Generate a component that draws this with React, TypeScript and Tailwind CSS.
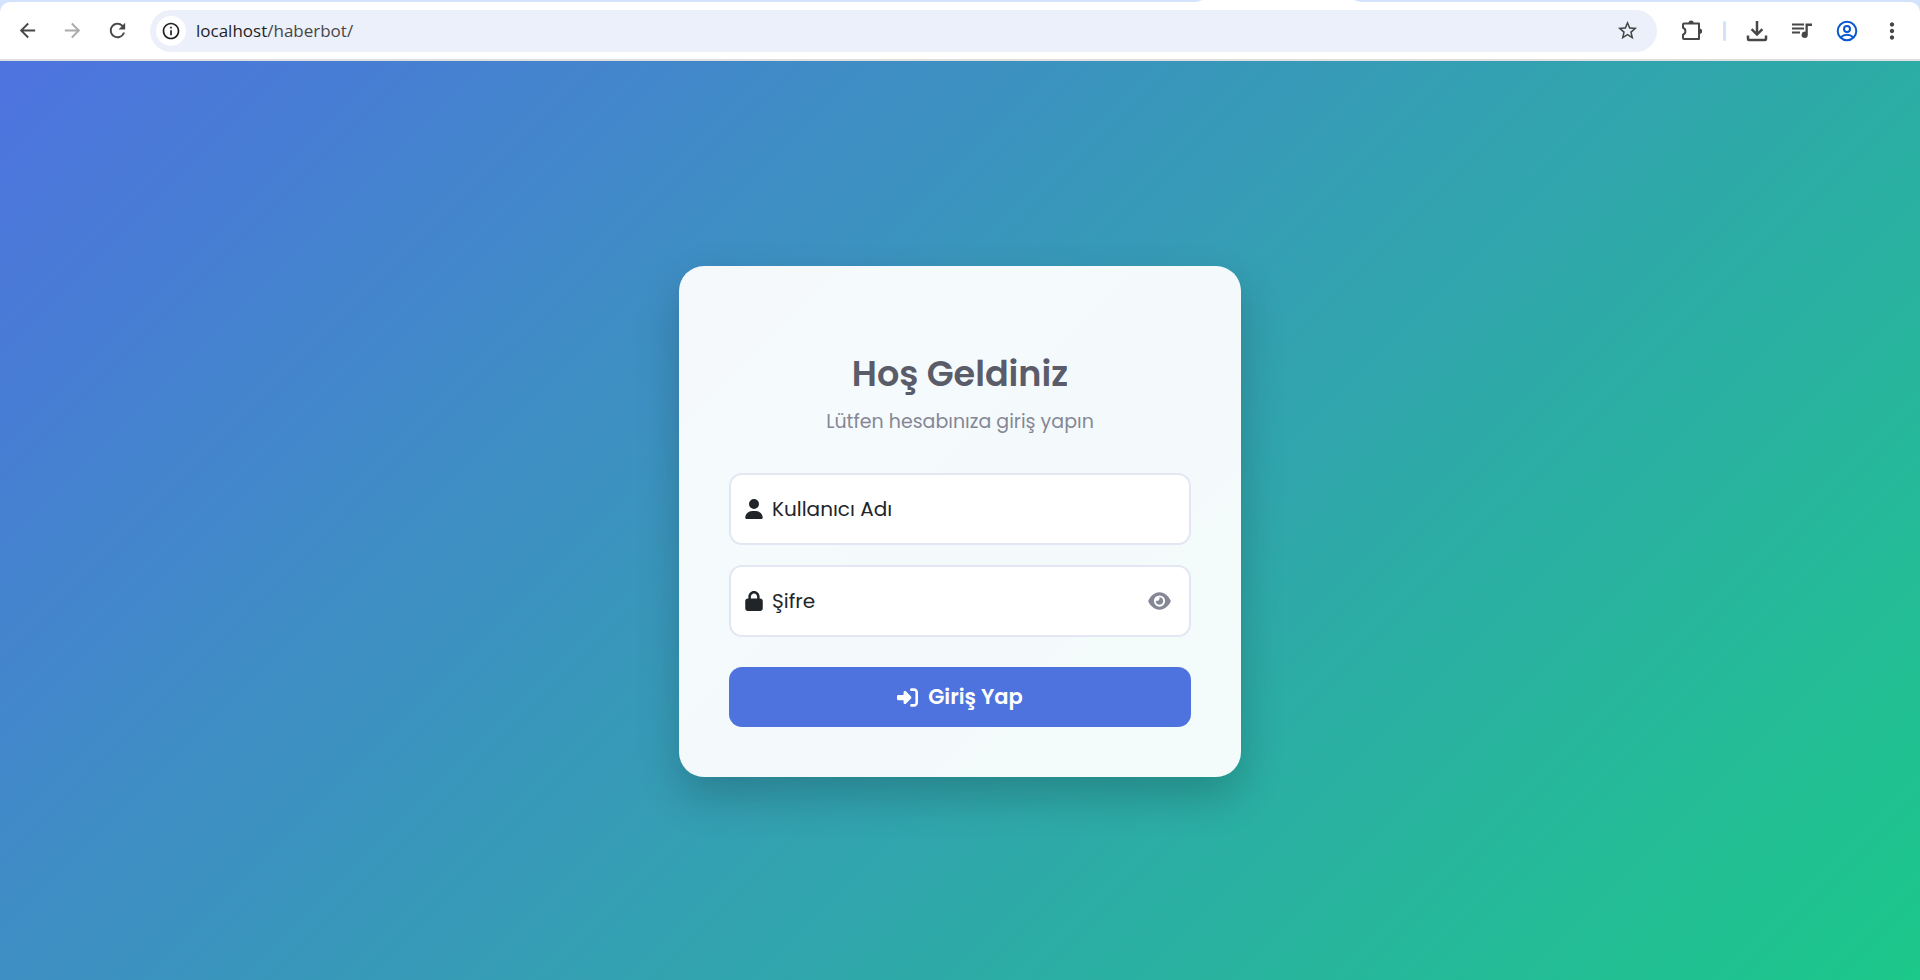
import { useState } from "react";
import type { ReactNode } from "react";
import { MdArrowBack, MdArrowForward, MdInfoOutline, MdMoreVert, MdRefresh, MdStarBorder } from "react-icons/md";
import { FaEye, FaEyeSlash, FaLock, FaRightToBracket, FaUser } from "react-icons/fa6";

function ToolButton({ label, children, className = "" }: { label: string; children: ReactNode; className?: string }) {
  return (
    <button type="button" aria-label={label} className={`flex h-8 w-[30px] items-center justify-center ${className}`}>
      {children}
    </button>
  );
}

function ExtensionIcon() {
  return (
    <svg viewBox="0 0 22 22" className="size-[22px]" fill="none" stroke="currentColor" strokeWidth="2">
      <path d="M3 3.5h15v15.5H3q-1 0-1-1v-3.4a3.6 3.6 0 0 0 0-6.8V4.5q0-1 1-1Z" strokeLinejoin="round" />
      <path d="M7.5 3a2.6 2.6 0 0 1 5.2 0ZM18.5 8.6a2.6 2.6 0 0 1 0 5.2Z" fill="currentColor" stroke="none" />
    </svg>
  );
}

function DownloadIcon() {
  return (
    <svg viewBox="0 0 22 22" className="size-[22px]" fill="none" stroke="currentColor" strokeWidth="2.5">
      <path d="M11 1v13.5M5.6 9.2 11 14.6l5.4-5.4M2 15.5v3.5q0 1 1 1h16q1 0 1-1v-3.5" />
    </svg>
  );
}

function MediaIcon() {
  return (
    <svg viewBox="0 0 20 16" className="h-4 w-5" fill="currentColor">
      <path d="M0 0.5h12v2H0zM0 4.5h12v2H0zM0 8.5h8v2H0z" />
      <path d="M13.5 0.5H20v2.4h-4.2v8.9a3.1 3.1 0 1 1-2.3-3Z" />
    </svg>
  );
}

function ProfileIcon() {
  return (
    <svg viewBox="0 0 22 22" className="size-[22px]" fill="none" stroke="currentColor" strokeWidth="2">
      <circle cx="11" cy="11" r="9.3" />
      <circle cx="11" cy="9" r="3" />
      <path d="M4.6 17.4q2.8-2.6 6.4-2.6t6.4 2.6" />
    </svg>
  );
}

function BrowserBar() {
  return (
    <header className="bg-[#d3e3fd]">
      <div className="flex h-[2px]">
        <div className="ml-[62.3%] w-[164px] bg-white [clip-path:polygon(4%_0,96%_0,100%_100%,0_100%)]" />
      </div>
      <div className="flex h-[59px] items-center rounded-t-[10px] border-b-2 border-[#dfdfdf] bg-white pr-[13px] pl-3 text-[#474747]">
        <nav className="flex gap-[15px]">
          <ToolButton label="Geri">
            <MdArrowBack className="size-[23px]" />
          </ToolButton>
          <ToolButton label="İleri" className="text-[#ababab]">
            <MdArrowForward className="size-[23px]" />
          </ToolButton>
          <ToolButton label="Yenile">
            <MdRefresh className="size-[23px]" />
          </ToolButton>
        </nav>
        <div className="ml-[18px] flex h-[42px] flex-1 items-center rounded-full bg-[#ebf0fa] pr-[15px] pl-1.5">
          <button type="button" aria-label="Site bilgileri" className="flex size-[30px] items-center justify-center rounded-full bg-white text-[#1f1f1f]">
            <MdInfoOutline className="size-5" />
          </button>
          <a href="#" className="ml-[10px] flex-1 font-['Open_Sans',sans-serif] text-[17px] leading-6 text-[#1f1f1f]">
            localhost<span className="text-[#474747]">/haberbot/</span>
          </a>
          <ToolButton label="Yer işareti ekle">
            <MdStarBorder className="size-[23px]" />
          </ToolButton>
        </div>
        <div className="ml-5 flex items-center gap-4">
          <ToolButton label="Uzantılar">
            <ExtensionIcon />
          </ToolButton>
          <span className="h-5 w-[3px] rounded-full bg-[#d3e3fd]" />
          <div className="flex items-center gap-[15px]">
            <ToolButton label="İndirilenler">
              <DownloadIcon />
            </ToolButton>
            <ToolButton label="Medya">
              <MediaIcon />
            </ToolButton>
            <ToolButton label="Profil" className="text-[#0b57d0]">
              <ProfileIcon />
            </ToolButton>
            <ToolButton label="Menü">
              <MdMoreVert className="size-[26px]" />
            </ToolButton>
          </div>
        </div>
      </div>
    </header>
  );
}

const fieldBox = "flex items-center rounded-[13px] border-2 border-[#e3e6f3] bg-white px-[14px]";
const fieldLabel = "flex shrink-0 items-center gap-[9px] text-[20px] leading-7 text-[#212529]";
const fieldInput = "h-[68px] min-w-0 flex-1 bg-transparent pl-2 text-[20px] text-[#212529] outline-none";

export default function App() {
  const [visible, setVisible] = useState(false);

  return (
    <div className="flex min-h-screen flex-col">
      <BrowserBar />
      <main className="flex flex-1 items-center justify-center bg-[linear-gradient(135deg,#4e73df_0%,#1cc88a_100%)] px-4 pt-[2px] font-[Poppins,Inter,sans-serif]">
        <form
          onSubmit={(event) => event.preventDefault()}
          className="w-full max-w-[562px] rounded-[25px] bg-white/95 p-[50px] shadow-[0_19px_44px_rgba(0,0,0,0.2)]"
        >
          <div className="pt-9 text-center">
            <h1 className="text-[35px] leading-[43px] font-semibold text-[#5a5c69]">Hoş Geldiniz</h1>
            <p className="mt-3 text-[19px] leading-[30px] text-[#858796]">Lütfen hesabınıza giriş yapın</p>
          </div>
          <div className="mt-9 flex flex-col gap-5">
            <div className={fieldBox}>
              <label htmlFor="username" className={fieldLabel}>
                <FaUser className="h-5 w-[18px]" />
                Kullanıcı Adı
              </label>
              <input id="username" type="text" autoComplete="username" className={fieldInput} />
            </div>
            <div className={fieldBox}>
              <label htmlFor="password" className={fieldLabel}>
                <FaLock className="h-5 w-[18px]" />
                Şifre
              </label>
              <input id="password" type={visible ? "text" : "password"} autoComplete="current-password" className={fieldInput} />
              <button
                type="button"
                aria-label="Şifreyi göster"
                onClick={() => setVisible(!visible)}
                className="flex h-10 w-8 items-center justify-center text-[#858796]"
              >
                {visible ? <FaEyeSlash className="h-5 w-[23px]" /> : <FaEye className="h-5 w-[23px]" />}
              </button>
            </div>
          </div>
          <button
            type="submit"
            className="mt-[30px] flex h-[60px] w-full items-center justify-center gap-[10px] rounded-[13px] bg-[#4e73df] text-[21px] font-semibold text-white"
          >
            <FaRightToBracket className="size-[21px]" />
            Giriş Yap
          </button>
        </form>
      </main>
    </div>
  );
}
